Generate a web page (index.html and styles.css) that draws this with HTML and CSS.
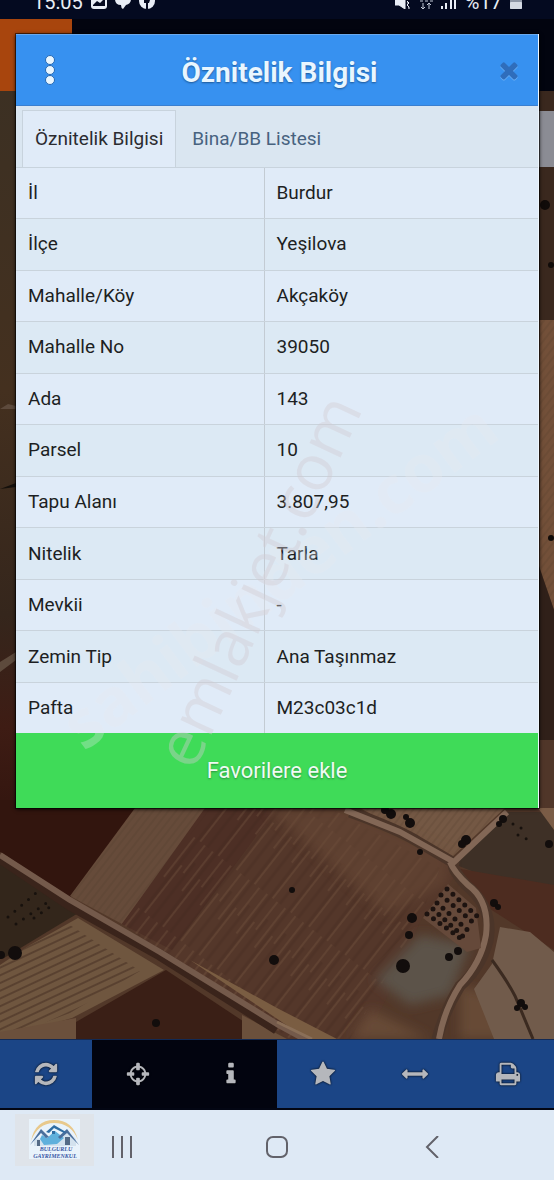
FILE: index.html
```html
<!DOCTYPE html>
<html lang="tr">
<head>
    <meta charset="UTF-8">
    <meta name="viewport" content="width=device-width, initial-scale=1.0">
    <title>Öznitelik Bilgisi</title>
    <link rel="stylesheet" href="styles.css">
</head>
<body>
    <header class="statusbar">
        <span class="clock">15:05</span>
        <svg width="16" height="16" viewBox="0 0 16 16"><rect width="16" height="16" rx="3" fill="#e8edf5"/><path d="M2 12l4-4 3 2 4-4 1 1v6H2z" fill="#050a20"/></svg>
        <svg class="chat" width="16" height="16" viewBox="0 0 16 16"><path d="M0 0h16v6q0 5-5 6l-3 4q-2-1-2-4Q0 12 0 6z" fill="#e8edf5"/></svg>
        <svg width="16" height="16" viewBox="0 0 16 16"><circle cx="8" cy="8" r="8" fill="#e8edf5"/><path d="M7 16v-6H5V7h2V5q0-3 4-3v2q-2 0-2 1v2h2l-1 3H9v6z" fill="#050a20"/></svg>
        <span class="spacer"></span>
        <svg width="16" height="16" viewBox="0 0 16 16"><path d="M0 6h4l6-5v15L4 12H0zM12 8l2 2-2 2 2 2v2" fill="#e8edf5" stroke="#e8edf5"/></svg>
        <svg class="data" width="14" height="16" viewBox="0 0 14 16"><path d="M1 8h3M6 8h3M11 8h3M4 10v6M2 14l2 2 2-2M10 16v-6M8 12l2-2 2 2" fill="none" stroke="#c3cad8"/></svg>
        <svg width="16" height="16" viewBox="0 0 16 16"><path d="M1 16v-3M5 16v-6M10 16V6M14 16V0" stroke="#e8edf5" stroke-width="2"/></svg>
        <span class="battery-level">%17</span>
        <svg width="12" height="16" viewBox="0 0 12 16"><rect width="12" height="16" rx="1" fill="#8f97a6"/><rect y="9" width="12" height="7" rx="1" fill="#d5dae3"/></svg>
    </header>

    <main class="map">
        <!-- Satellite layer -->
        <svg class="satellite" viewBox="0 19 554 1020" preserveAspectRatio="xMidYMid slice" aria-hidden="true">
            <defs>
                <pattern id="rows" width="23" height="90" patternUnits="userSpaceOnUse" patternTransform="rotate(38)">
                    <path d="M2 0v50M9 30v60M15 0v35" stroke="#7b5b45" stroke-width="2" opacity=".3"/>
                    <path d="M6 0v90M18 20v70" stroke="#3a2118" stroke-width="3" opacity=".22"/>
                </pattern>
                <pattern id="light-rows" width="30" height="7" patternUnits="userSpaceOnUse" patternTransform="rotate(-25)">
                    <path d="M0 2h30" stroke="#4b3326" stroke-width="2" opacity=".6"/>
                </pattern>
                <pattern id="fine" width="6" height="40" patternUnits="userSpaceOnUse" patternTransform="rotate(38)">
                    <path d="M2 0v40" stroke="#4a3428" stroke-width="1" opacity=".35"/>
                </pattern>
                <linearGradient id="left-edge" x1="0" y1="90" x2="0" y2="840" gradientUnits="userSpaceOnUse">
                    <stop offset="0" stop-color="#3c3023"/>
                    <stop offset=".4" stop-color="#44301f"/>
                    <stop offset=".7" stop-color="#35261c"/>
                    <stop offset=".85" stop-color="#3e1c14"/>
                    <stop offset="1" stop-color="#30140e"/>
                </linearGradient>
                <filter id="soft"><feGaussianBlur stdDeviation="6"/></filter>
            </defs>
            <rect y="19" width="554" height="1020" fill="#523829"/>
            <rect y="90" width="40" height="760" fill="url(#left-edge)"/>
            <path d="M0 662l16-10v8L0 672zM0 409l8-5 8 2v3z" fill="#5d4a3c"/>
            <path d="M0 489l16-6v4z" fill="#15100c"/>
            <!-- right edge -->
            <path d="M530 90h24v232h-24z" fill="#3a281e"/>
            <path d="M530 320h24v290l-24-70z" fill="#735039"/>
            <path d="M530 320h24v290l-24-70z" fill="url(#fine)"/>
            <path d="M530 540l24 70v150h-24z" fill="#302019"/>
            <path d="M530 740h24v100h-24z" fill="#503629"/>
            <g fill="#100b09"><circle cx="545" cy="205" r="5"/><circle cx="551" cy="265" r="3"/><circle cx="551" cy="538" r="3"/></g>
            <!-- fields -->
            <path d="M0 800h150L70 898 0 852z" fill="#32150e"/>
            <path d="M0 855l80 57-76 46-4-3z" fill="#33261b"/>
            <path d="M135 808h75L122 924l-52-28z" fill="#664b3a"/>
            <path d="M135 808h75L122 924l-52-28z" fill="url(#fine)"/>
            <path d="M210 808h120l132 60-40 50-54 121h-80L122 924z" fill="#54372a"/>
            <path d="M205 808h72L172 950l-50-26z" fill="#4d2f25"/>
            <path d="M210 808h120l110 60-20 50-70 121h-60L122 924z" fill="url(#rows)"/>
            <path d="M0 965l30-20 48-27 86 52-92 48-72 21z" fill="#6f563f"/>
            <path d="M0 965l30-20 40-20 70 46-70 42-70 26z" fill="url(#light-rows)"/>
            <path d="M76 1022l90-52 104 69H76z" fill="#3a1f16"/>
            <path d="M0 1032l76-14v21H0zM242 1015l45 24h-45z" fill="#6b503c"/>
            <path d="M190 960l87 48 60 31h-30z" fill="#7a5d42"/>
            <path d="M360 808h145l-54 50z" fill="#745844"/>
            <path d="M360 808h145l-54 50z" fill="url(#fine)"/>
            <path d="M505 812h49v80l-80-20-20-8z" fill="#3e3026"/>
            <path d="M455 868l99 17v65l-70-45z" fill="#4d2c20"/>
            <path d="M350 808l100 46-3 30-60 30-120-106z" fill="#6a4c38" opacity=".5" filter="url(#soft)"/>
            <path d="M538 808h16v22z" fill="#7a5c46"/>
            <g filter="url(#soft)">
                <path d="M375 980l45-45 50 10-20 50-40 10z" fill="#5c534a"/>
                <path d="M350 1039l20-30 60 30zM460 985l30 10 30 44h-60z" fill="#70533c" opacity=".7"/>
            </g>
            <path d="M500 927l30 5 24 20v87h-60l-20-50 18-25z" fill="#715b4b"/>
            <path d="M492 960q16 22 23 36l18 43" fill="none" stroke="#3b2a20" stroke-width="3"/>
            <!-- roads -->
            <g fill="none" stroke-linejoin="round">
                <path d="M0 858l70 47 90 50 117 74" stroke="#3a241b" stroke-width="11"/>
                <path d="M0 855l70 45 90 52 117 72 40 22" stroke="#745a4b" stroke-width="6"/>
                <path d="M277 1022l35 17" stroke="#8a6f58" stroke-width="3"/>
                <path d="M350 812q50 18 70 31l34 20q-4 4 12 22 28 23 22 56-8 28-28 45-16 25-24 57" stroke="#4b3529" stroke-width="11"/>
                <path d="M345 810l55 22 54 30 53-50M450 862q4 10 18 23 22 16 18 50-5 28-26 50-16 25-21 54" stroke="#826756" stroke-width="6"/>
            </g>
            <!-- orchard -->
            <path d="M448 884l28 24 5 40-14 4-44-34z" fill="#65493a"/>
            <g fill="none" stroke="#1d1310" stroke-width="5" stroke-linecap="round">
                <path d="M447 889l32 29M441 895l34 29M437 903l35 31M433 909l34 31M427 914l33 24" stroke-dasharray="0 8"/>
            </g>
            <g fill="#120d0c">
                <circle cx="391" cy="814" r="5"/><circle cx="385" cy="810" r="4"/><circle cx="410" cy="823" r="5"/><circle cx="406" cy="817" r="3"/><circle cx="420" cy="852" r="3"/>
                <circle cx="466" cy="840" r="5"/><circle cx="462" cy="844" r="4"/><circle cx="503" cy="819" r="4"/><circle cx="499" cy="824" r="3"/><circle cx="549" cy="844" r="4"/>
                <circle cx="412" cy="918" r="5"/><circle cx="409" cy="935" r="4"/><circle cx="403" cy="966" r="7"/>
                <circle cx="449" cy="957" r="4"/><circle cx="458" cy="951" r="4"/><circle cx="494" cy="903" r="4"/><circle cx="498" cy="907" r="3"/>
                <circle cx="521" cy="1003" r="4"/><circle cx="517" cy="1008" r="3"/><circle cx="525" cy="1007" r="3"/><circle cx="274" cy="960" r="5"/>
                <circle cx="292" cy="890" r="3"/><circle cx="15" cy="953" r="7"/><circle cx="1" cy="955" r="4"/>
                <circle cx="156" cy="1023" r="4"/>
            </g>
            <g fill="none" stroke="#17110d" stroke-width="3" stroke-linecap="round">
                <path d="M8 917l28-24M16 924l32-22M34 918l20-14M513 824l10 5M518 835l15 7" stroke-dasharray="0 9"/>
            </g>
        </svg>

        <div class="app-header"><div class="app-logo"></div></div>
        <div class="search-box"></div>

        <section class="dialog" role="dialog" aria-labelledby="dialog-title">
            <header class="dialog-header">
                <button class="icon-btn" aria-label="Menü">
                    <svg width="10" height="30" viewBox="0 0 10 30"><g fill="#e9f6ff" stroke="#2568b3"><circle cx="5" cy="5" r="4.5"/><circle cx="5" cy="15" r="4.5"/><circle cx="5" cy="25" r="4.5"/></g></svg>
                </button>
                <h1 id="dialog-title">Öznitelik Bilgisi</h1>
                <button class="icon-btn close-btn" aria-label="Kapat">
                    <svg class="close" width="26" height="26" viewBox="0 0 1792 1792"><path d="M1490 1322q0 40-28 68l-136 136q-28 28-68 28t-68-28l-294-294-294 294q-28 28-68 28t-68-28l-136-136q-28-28-28-68t28-68l294-294-294-294q-28-28-28-68t28-68l136-136q28-28 68-28t68 28l294 294 294-294q28-28 68-28t68 28l136 136q28 28 28 68t-28 68l-294 294 294 294q28 28 28 68z"/></svg>
                </button>
            </header>

            <nav class="tabs">
                <button class="tab active">Öznitelik Bilgisi</button>
                <button class="tab">Bina/BB Listesi</button>
            </nav>

            <table class="attributes">
                <tr><th scope="row">İl</th><td>Burdur</td></tr>
                <tr><th scope="row">İlçe</th><td>Yeşilova</td></tr>
                <tr><th scope="row">Mahalle/Köy</th><td>Akçaköy</td></tr>
                <tr><th scope="row">Mahalle No</th><td>39050</td></tr>
                <tr><th scope="row">Ada</th><td>143</td></tr>
                <tr><th scope="row">Parsel</th><td>10</td></tr>
                <tr><th scope="row">Tapu Alanı</th><td>3.807,95</td></tr>
                <tr><th scope="row">Nitelik</th><td>Tarla</td></tr>
                <tr><th scope="row">Mevkii</th><td>-</td></tr>
                <tr><th scope="row">Zemin Tip</th><td>Ana Taşınmaz</td></tr>
                <tr><th scope="row">Pafta</th><td>M23c03c1d</td></tr>
            </table>

            <button class="favorite">Favorilere ekle</button>
        </section>

        <svg class="watermark" viewBox="0 19 554 1020" aria-hidden="true">
            <text class="mark-bold" transform="translate(84 752) rotate(-37)">sahibinden.com</text>
            <text class="mark-thin" transform="translate(194 772) rotate(-65)">emlakjet.com</text>
        </svg>
    </main>

    <nav class="toolbar">
        <button aria-label="Yenile"><svg viewBox="0 0 1792 1792"><path d="M1639 1056q0 5-1 7-64 268-268 434.5t-478 166.5q-146 0-282.5-55t-243.5-157l-129 129q-19 19-45 19t-45-19-19-45v-448q0-26 19-45t45-19h448q26 0 45 19t19 45-19 45l-137 137q71 66 161 102t187 36q134 0 250-65t186-179q11-17 53-117 8-23 30-23h192q13 0 22.5 9.5t9.5 22.5zm25-800v448q0 26-19 45t-45 19h-448q-26 0-45-19t-19-45 19-45l138-138q-148-137-349-137-134 0-250 65t-186 179q-11 17-53 117-8 23-30 23h-199q-13 0-22.5-9.5t-9.5-22.5v-7q65-268 270-434.5t480-166.5q146 0 284 55.5t245 156.5l130-129q19-19 45-19t45 19 19 45z"/></svg></button>
        <button class="pressed" aria-label="Konum"><svg viewBox="0 0 1792 1792"><path d="M1325 1024h-109q-26 0-45-19t-19-45v-128q0-26 19-45t45-19h109q-32-108-112.5-188.5t-188.5-112.5v109q0 26-19 45t-45 19h-128q-26 0-45-19t-19-45v-109q-108 32-188.5 112.5t-112.5 188.5h109q26 0 45 19t19 45v128q0 26-19 45t-45 19h-109q32 108 112.5 188.5t188.5 112.5v-109q0-26 19-45t45-19h128q26 0 45 19t19 45v109q108-32 188.5-112.5t112.5-188.5zm339-192v128q0 26-19 45t-45 19h-143q-37 161-154.5 278.5t-278.5 154.5v143q0 26-19 45t-45 19h-128q-26 0-45-19t-19-45v-143q-161-37-278.5-154.5t-154.5-278.5h-143q-26 0-45-19t-19-45v-128q0-26 19-45t45-19h143q37-161 154.5-278.5t278.5-154.5v-143q0-26 19-45t45-19h128q26 0 45 19t19 45v143q161 37 278.5 154.5t154.5 278.5h143q26 0 45 19t19 45z"/></svg></button>
        <button class="pressed" aria-label="Bilgi"><svg viewBox="0 0 1792 1792"><path d="M1216 1344v128q0 26-19 45t-45 19h-512q-26 0-45-19t-19-45v-128q0-26 19-45t45-19h64v-384h-64q-26 0-45-19t-19-45v-128q0-26 19-45t45-19h384q26 0 45 19t19 45v576h64q26 0 45 19t19 45zm-128-1152v192q0 26-19 45t-45 19h-256q-26 0-45-19t-19-45v-192q0-26 19-45t45-19h256q26 0 45 19t19 45z"/></svg></button>
        <button aria-label="Favoriler"><svg viewBox="0 0 1792 1792"><path d="M1728 647q0 22-26 48l-363 354 86 500q1 7 1 20 0 21-10.5 35.5t-30.5 14.5q-19 0-40-12l-449-236-449 236q-22 12-40 12-21 0-31.5-14.5t-10.5-35.5q0-6 2-20l86-500-364-354q-25-27-25-48 0-37 56-46l502-73 225-455q19-41 49-41t49 41l225 455 502 73q56 9 56 46z"/></svg></button>
        <button aria-label="Ölçüm"><svg viewBox="0 0 1792 1792"><path d="M1792 896q0 26-19 45l-256 256q-19 19-45 19t-45-19-19-45v-128h-1024v128q0 26-19 45t-45 19-45-19l-256-256q-19-19-19-45t19-45l256-256q19-19 45-19t45 19 19 45v128h1024v-128q0-26 19-45t45-19 45 19l256 256q19 19 19 45z"/></svg></button>
        <button aria-label="Yazdır"><svg viewBox="0 0 1792 1792"><path d="M448 1536h896v-256h-896v256zm0-640h896v-384h-160q-40 0-68-28t-28-68v-160h-640v640zm1152 64q0-26-19-45t-45-19-45 19-19 45 19 45 45 19 45-19 19-45zm128 0v416q0 13-9.5 22.5t-22.5 9.5h-224v160q0 40-28 68t-68 28h-960q-40 0-68-28t-28-68v-160h-224q-13 0-22.5-9.5t-9.5-22.5v-416q0-79 56.5-135.5t135.5-56.5h64v-544q0-40 28-68t68-28h672q40 0 88 20t76 48l152 152q28 28 48 76t20 88v256h64q79 0 135.5 56.5t56.5 135.5z"/></svg></button>
    </nav>

    <footer class="navbar">
        <!-- agency badge -->
        <div class="agency">
            <svg width="51" height="40" viewBox="0 0 51 40">
                <rect width="51" height="40" fill="#e9f3fb"/>
                <path d="M2 22Q6 1 25 1q19 0 24 20Q42 4 25 4 9 4 2 22z" fill="#e8c98c"/>
                <path d="M5 20v7h42v-7l-9-8-8 6z" fill="#d3e2ee"/>
                <path d="M13 16l5 3 8-7 9 7-7 6-13 1-4-6z" fill="#5fb0dc"/>
                <path d="M1 26l11-16 8 8-3 1-5-5zM50 26L38 10l-9 8 2 2 7-6z" fill="#4a6f9c"/>
                <path d="M17 13l8-7 12 7-2 1-10-5-5 5z" fill="#2f6da3"/>
                <path d="M8 21h3v6H8zM36 18h5v8h-5z" fill="#546b86"/>
                <path d="M23 12h3v3h-3z" fill="#2f6da3"/>
                <text x="27" y="32" text-anchor="middle">BULGURLU</text>
                <text x="26" y="39" text-anchor="middle">GAYRİMENKUL</text>
            </svg>
        </div>
        <button aria-label="Son uygulamalar"><svg width="22" height="22" viewBox="0 0 22 22"><path d="M2 0v22M11 0v22M20 0v22"/></svg></button>
        <button aria-label="Ana ekran"><svg width="22" height="22" viewBox="0 0 22 22"><rect x="1" y="1" width="20" height="20" rx="6"/></svg></button>
        <button aria-label="Geri"><svg width="22" height="22" viewBox="0 0 22 22"><path d="M17 0L6 11l11 11"/></svg></button>
    </footer>
</body>
</html>
```
FILE: styles.css
```css
* {
    box-sizing: border-box;
}

body {
    margin: 0;
    min-height: 100vh;
    display: flex;
    flex-direction: column;
    font-family: Roboto, "Liberation Sans", sans-serif;
    background: #dee9f5;
}

button {
    margin: 0;
    padding: 0;
    border: 0;
    background: none;
    font-family: inherit;
    cursor: pointer;
}

/* Phone status bar */
.statusbar {
    display: flex;
    align-items: flex-end;
    gap: 8px;
    height: 19px;
    padding: 0 32px 10px 33px;
    overflow: hidden;
    background: #040a20;
    color: #e8edf5;
    font-size: 20px;
    line-height: 20px;
}

.statusbar svg {
    flex: none;
}

.clock,
.battery-level {
    height: 17px;
}

.spacer {
    flex: 1;
}

/* Map */
.map {
    position: relative;
    flex: 1;
    padding: 15px 15px 230px 16px;
    background: #523829;
}

.satellite,
.watermark {
    position: absolute;
    top: 0;
    left: 0;
    width: 100%;
    height: 100%;
}

.watermark {
    pointer-events: none;
}

.mark-thin {
    font: 400 64px "Open Sans", sans-serif;
    fill: #d2cbd2;
    opacity: 0.4;
}

.mark-bold {
    font: bold 66px "Open Sans", sans-serif;
    fill: #e8eaf0;
    opacity: 0.3;
}

.app-header {
    position: absolute;
    top: 0;
    left: 0;
    right: 0;
    height: 72px;
    background: #02040f;
}

.app-logo {
    width: 72px;
    height: 100%;
    background: #a8450d;
}

.search-box {
    position: absolute;
    top: 92px;
    left: 50%;
    right: 0;
    height: 56px;
    background: #8b8c94;
}

/* Dialog */
.dialog {
    position: relative;
    border-right: 1px solid #eef6fd;
    background: #e0ebf8;
    box-shadow: 0 0 0 1px rgba(0, 0, 0, 0.5), 0 1px 4px #000;
}

.dialog-header {
    display: flex;
    align-items: center;
    justify-content: space-between;
    height: 72px;
    padding: 0 7px 0 12px;
    border-top: 1px solid #6aa9ee;
    border-bottom: 1px solid #3a7fd0;
    background: #3791f0;
}

.dialog-header h1 {
    margin: 0;
    padding-top: 6px;
    color: #e9f6ff;
    font-size: 28px;
    line-height: 32px;
    font-weight: 700;
    text-shadow: 0 1px 2px #1d5796;
}

.icon-btn {
    display: flex;
    align-items: center;
    justify-content: center;
    width: 44px;
    height: 44px;
}

.close {
    fill: #2f6dbb;
    filter: drop-shadow(0 1px 0 #6bb0f5);
}

.tabs {
    display: flex;
    height: 62px;
    padding: 4px 6px 0;
    border-bottom: 1px solid #c8d3dd;
    background: #dae6f1;
}

.tab {
    padding: 0 12px;
    border: 1px solid transparent;
    color: #47627f;
    font-size: 19px;
    line-height: 24px;
}

.tab + .tab {
    padding-left: 15px;
}

.tab.active {
    border-color: #c8d3dd;
    border-bottom: 0;
    background: #e0ebf8;
    color: #2b2b30;
}

.attributes {
    width: 100%;
    height: 565px;
    border-collapse: collapse;
    color: #1d1f23;
    font-size: 19px;
    line-height: 24px;
}

.attributes th,
.attributes td {
    padding: 0 12px;
    border-bottom: 1px solid #c9d3dc;
    font-weight: 400;
    text-align: left;
}

.attributes th {
    width: 248px;
    border-right: 1px solid #c3cbd3;
}

.attributes tr:nth-child(even) {
    background: #dce9f4;
}

.attributes tr:last-child th,
.attributes tr:last-child td {
    border-bottom: 0;
}

.favorite {
    display: block;
    width: 100%;
    height: 75px;
    background: #3fdb58;
    color: #effbf3;
    font-size: 22px;
    text-shadow: 0 1px 2px #2b8f3c;
}

/* Map tools */
.toolbar {
    display: grid;
    grid-template-columns: repeat(6, 1fr);
    height: 71px;
    border-top: 1px solid #122a55;
    border-bottom: 2px solid #030613;
    background: #1b4586;
}

.toolbar button {
    display: flex;
    align-items: center;
    justify-content: center;
}

.toolbar .pressed {
    background: #02040f;
}

.toolbar svg {
    width: 26px;
    height: 26px;
    fill: #b5b7bc;
    filter: drop-shadow(0 0 1px #000);
}

/* Phone navigation */
.navbar {
    position: relative;
    display: flex;
    align-items: center;
    justify-content: center;
    gap: 133px;
    height: 70px;
    padding-top: 4px;
    background: #dee9f5;
}

.navbar button {
    display: flex;
}

.navbar button svg {
    fill: none;
    stroke: #62626a;
    stroke-width: 2;
}

.agency {
    position: absolute;
    top: 4px;
    left: 15px;
    padding: 5px 14px 7px;
    background: #dfe4ea;
}

.agency svg {
    display: block;
}

.agency text {
    font: italic bold 6px "Liberation Serif", serif;
    fill: #3a57a5;
}
```
